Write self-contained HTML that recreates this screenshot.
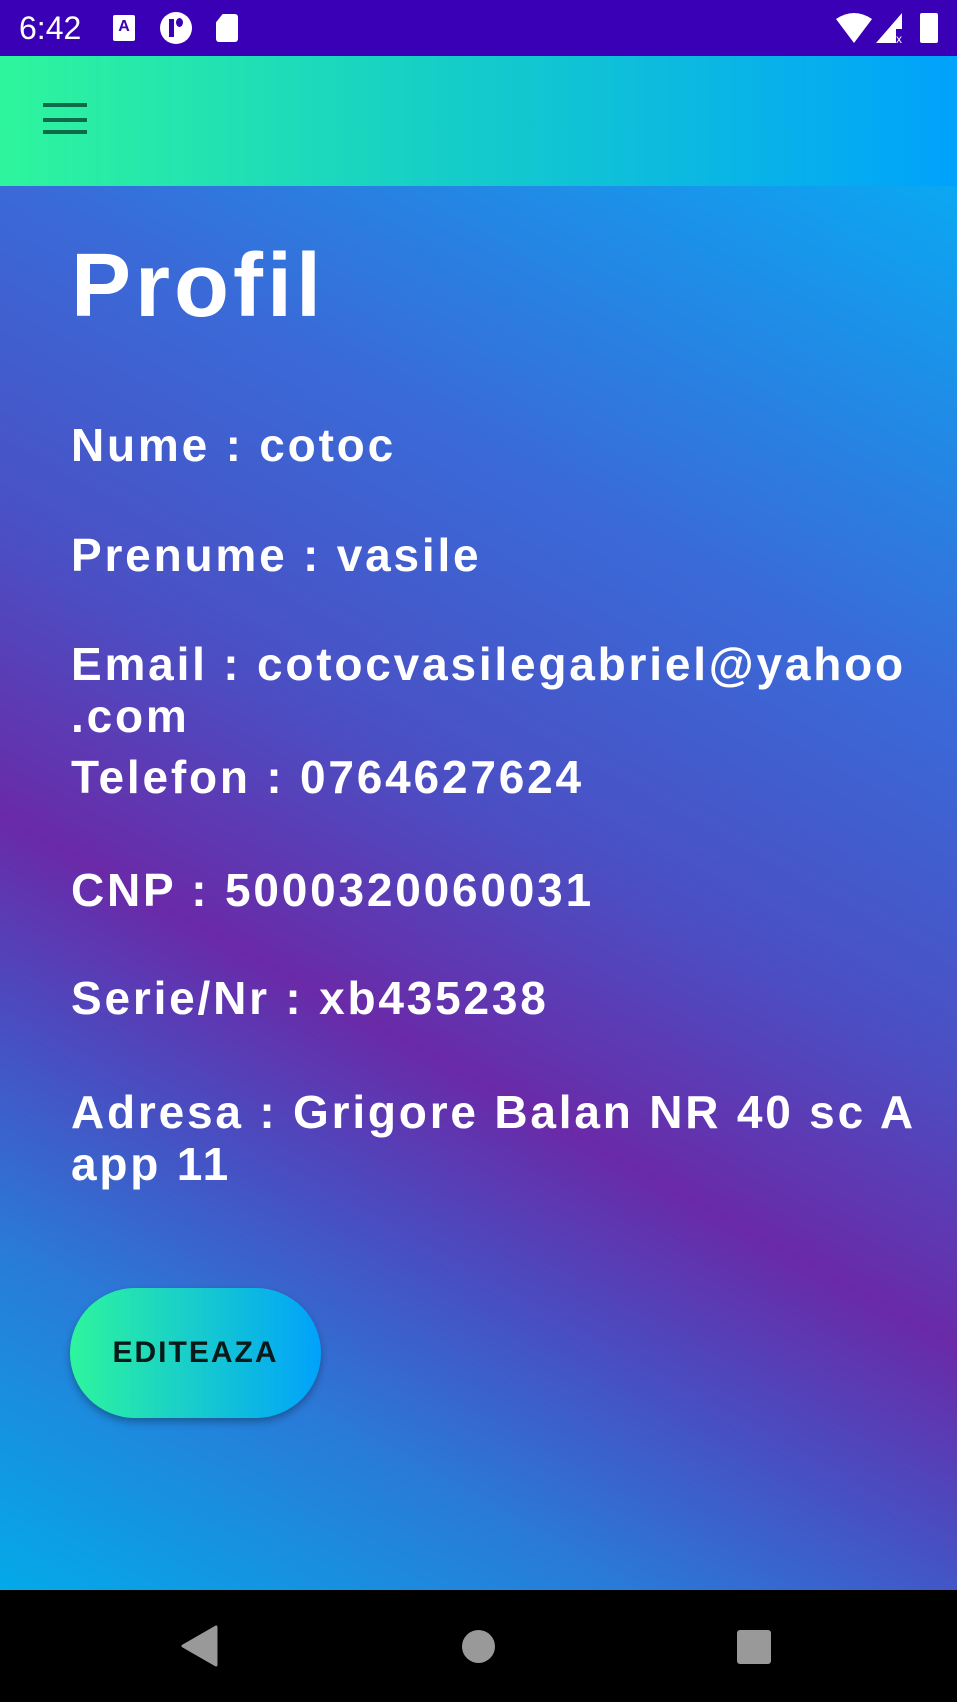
<!DOCTYPE html>
<html><head><meta charset="utf-8"><style>
html,body{margin:0;padding:0;width:957px;height:1702px;overflow:hidden;font-family:"Liberation Sans",sans-serif}
.sb{position:absolute;top:0;left:0;width:957px;height:56px;background:#3a00b6;color:#fff}
.ab{position:absolute;top:56px;left:0;width:957px;height:130px;background:linear-gradient(90deg,#2ef59d,#16cfc6 45%,#00a2fc)}
.main{position:absolute;top:186px;left:0;width:957px;height:1404px;background:linear-gradient(29deg,#03aae8 0%,#2a7ad8 18%,#4a4cc0 30%,#6a2aa8 40%,#4a50c4 55%,#3a6ad8 73%,#0aa8f2 100%)}
.nav{position:absolute;top:1590px;left:0;width:957px;height:112px;background:#000}
.t{position:absolute;left:71px;color:#fff;font-weight:bold;font-size:46px;line-height:52px;white-space:nowrap;letter-spacing:2.8px}
.btn{position:absolute;left:70px;top:1288px;width:251px;height:130px;border-radius:65px;background:linear-gradient(90deg,#2ef59d,#00a2fc);box-shadow:0 4px 8px rgba(0,0,0,.3);color:#0a1a1a;font-weight:bold;font-size:30px;letter-spacing:2px;display:flex;align-items:center;justify-content:center}
</style></head><body>
<div class="sb">
<div style="position:absolute;left:19px;top:10px;font-size:32px">6:42</div>
<div style="position:absolute;left:113px;top:15px;width:22px;height:26px;background:#fff;border-radius:2px;color:#3a00b6;font-size:16px;font-weight:bold;text-align:center;line-height:24px">A</div>
<div style="position:absolute;left:160px;top:12px;width:32px;height:32px;border-radius:50%;background:#fff"><div style="position:absolute;left:9px;top:7px;width:5px;height:18px;background:#3a00b6"></div><div style="position:absolute;left:16px;top:6px;width:7px;height:9px;border-radius:50%;background:#3a00b6"></div></div>
<div style="position:absolute;left:216px;top:14px;width:22px;height:28px;background:#fff;border-radius:3px;clip-path:polygon(30% 0,100% 0,100% 100%,0 100%,0 30%)"></div>
<svg style="position:absolute;left:836px;top:13px" width="36" height="30"><path d="M0 6 Q18 -6 36 6 L18 30Z" fill="#fff"/></svg>
<svg style="position:absolute;left:876px;top:13px" width="30" height="30"><path d="M26 0 L26 16 L20 16 L20 30 L0 30Z" fill="#fff"/><text x="20" y="30" font-size="12" fill="#fff" font-family="Liberation Sans">x</text></svg>
<div style="position:absolute;left:920px;top:13px;width:18px;height:30px;background:#fff;border-radius:2px"></div>
</div>
<div class="ab">
<div style="position:absolute;left:43px;top:47px;width:44px;height:4px;background:#0d6b4b"></div>
<div style="position:absolute;left:43px;top:62px;width:44px;height:4px;background:#0d6b4b"></div>
<div style="position:absolute;left:43px;top:74px;width:44px;height:4px;background:#0d6b4b"></div>
</div>
<div class="main"></div>
<div class="t" style="top:236px;font-size:90px;line-height:100px;letter-spacing:4px">Profil</div>
<div class="t" style="top:419px">Nume : cotoc</div>
<div class="t" style="top:529px">Prenume : vasile</div>
<div class="t" style="top:638px">Email : cotocvasilegabriel@yahoo<br>.com</div>
<div class="t" style="top:751px">Telefon : 0764627624</div>
<div class="t" style="top:864px">CNP : 5000320060031</div>
<div class="t" style="top:972px">Serie/Nr : xb435238</div>
<div class="t" style="top:1086px">Adresa : Grigore Balan NR 40 sc A<br>app 11</div>
<div class="btn">EDITEAZA</div>
<div class="nav">
<svg style="position:absolute;left:180px;top:35px" width="40" height="42"><path d="M36 2 L36 40 L3 21Z" fill="#999" stroke="#999" stroke-width="3" stroke-linejoin="round"/></svg>
<div style="position:absolute;left:462px;top:40px;width:33px;height:33px;border-radius:50%;background:#999"></div>
<div style="position:absolute;left:737px;top:40px;width:34px;height:34px;border-radius:3px;background:#999"></div>
</div>
</body></html>
